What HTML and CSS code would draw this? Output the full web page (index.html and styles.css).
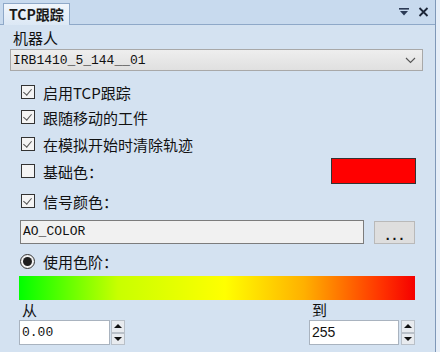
FILE: index.html
```html
<!DOCTYPE html>
<html lang="zh">
<head>
  <meta charset="UTF-8">
  <title>TCP跟踪</title>
  <link rel="stylesheet" href="styles.css">
</head>
<body>
  <div class="panel">
    <div class="tabstrip">
      <div class="tab">TCP跟踪</div>
      <div class="tab-tools">
        <svg width="12" height="10" viewBox="0 0 12 10"><rect x="1" y="1" width="10" height="1.6" fill="#2b3a55"/><path d="M2 4 L10 4 L6 8.5 Z" fill="#2b3a55"/></svg>
        <svg width="11" height="10" viewBox="0 0 11 10"><path d="M1.5 1 L9.5 9 M9.5 1 L1.5 9" stroke="#1c2638" stroke-width="1.8"/></svg>
      </div>
    </div>

    <div class="konten">
      <div class="label-robot">机器人</div>
      <div class="combo">
        <span class="mono">IRB1410_5_144__01</span>
        <svg width="11" height="7" viewBox="0 0 11 7"><path d="M1 1 L5.5 5.5 L10 1" stroke="#555" fill="none" stroke-width="1.1"/></svg>
      </div>

      <div class="checks">
        <div class="check-row">
          <span class="cb on"></span><span>启用TCP跟踪</span>
        </div>
        <div class="check-row gap-s">
          <span class="cb on"></span><span>跟随移动的工件</span>
        </div>
        <div class="check-row gap-m">
          <span class="cb on"></span><span>在模拟开始时清除轨迹</span>
        </div>
        <div class="check-row gap-m">
          <span class="cb"></span><span>基础色：</span>
          <span class="swatch"></span>
        </div>
        <div class="check-row gap-l">
          <span class="cb on"></span><span>信号颜色：</span>
        </div>
      </div>

      <div class="signal-row">
        <div class="textbox mono">AO_COLOR</div>
        <div class="btn-dots">...</div>
      </div>

      <div class="radio-row">
        <span class="radio"></span><span>使用色阶：</span>
      </div>

      <div class="gradient"></div>

      <div class="range-row">
        <div class="range">
          <div class="range-label">从</div>
          <div class="spin">
            <div class="spin-input mono">0.00</div>
            <div class="spin-btns">
              <span class="up"></span>
              <span class="down"></span>
            </div>
          </div>
        </div>
        <div class="range">
          <div class="range-label">到</div>
          <div class="spin">
            <div class="spin-input sans">255</div>
            <div class="spin-btns">
              <span class="up"></span>
              <span class="down"></span>
            </div>
          </div>
        </div>
      </div>
    </div>
  </div>
</body>
</html>
```

FILE: styles.css
```css
body {
  margin: 0;
  background: #e6eef8;
  font-family: "Noto Sans CJK SC", "Noto Sans", sans-serif;
  color: #111;
}

.panel {
  width: 435px;
  height: 352px;
  background: #d4e2f1;
  border-right: 1px solid #7f98b8;
  overflow: hidden;
}

.tabstrip {
  height: 25px;
  background: #c8daee;
  border-bottom: 1px solid #8ea8c8;
  box-sizing: border-box;
  display: flex;
  align-items: flex-end;
  justify-content: space-between;
}

.tab {
  margin-left: 3px;
  width: 67px;
  height: 22px;
  box-sizing: border-box;
  border: 1px solid #8ea8c8;
  border-bottom: none;
  background: linear-gradient(#f1f6fc, #dce8f5);
  font-size: 14px;
  font-weight: bold;
  line-height: 21px;
  padding-left: 5px;
  color: #1a1a1a;
  margin-bottom: -1px;
}

.tab-tools {
  display: flex;
  gap: 8px;
  align-items: center;
  height: 25px;
  padding-right: 6px;
}

.konten {
  padding: 3px 0 0 10px;
}

.mono {
  font-family: "Liberation Mono", "Noto Sans CJK SC", monospace;
}

.sans {
  font-family: "Liberation Sans", sans-serif;
}

.label-robot {
  font-size: 15px;
  line-height: 20px;
  padding-left: 3px;
}

.combo {
  margin-top: 1px;
  width: 413px;
  height: 22px;
  box-sizing: border-box;
  border: 1px solid #a8a8a8;
  background: linear-gradient(#eeeeee, #e0e0e0);
  display: flex;
  align-items: center;
  justify-content: space-between;
  padding: 0 6px 0 2px;
  font-size: 13px;
}

.checks {
  margin-top: 8px;
  padding-left: 11px;
  display: flex;
  flex-direction: column;
}

.check-row {
  height: 26px;
  display: flex;
  align-items: center;
  font-size: 15px;
}

.check-row.gap-s {
  margin-top: -1px;
}

.check-row.gap-m {
  margin-top: 1px;
}

.check-row.gap-l {
  margin-top: 4px;
}

.cb {
  width: 14px;
  height: 14px;
  box-sizing: border-box;
  border: 1px solid #333;
  background: #f4f4f4;
  margin-right: 8px;
  position: relative;
}

.cb.on::after {
  content: "";
  position: absolute;
  left: 3px;
  top: 1px;
  width: 4px;
  height: 7px;
  border-right: 1.5px solid #555;
  border-bottom: 1.5px solid #555;
  transform: rotate(40deg);
}

.swatch {
  margin-left: auto;
  margin-right: 19px;
  width: 85px;
  height: 26px;
  box-sizing: border-box;
  background: #ff0000;
  border: 1px solid #333;
}

.signal-row {
  margin-top: 6px;
  padding-left: 10px;
  display: flex;
  align-items: center;
  gap: 10px;
}

.textbox {
  width: 344px;
  height: 24px;
  box-sizing: border-box;
  border: 1px solid #7c7c7c;
  background: #f1f1f1;
  font-size: 13px;
  line-height: 22px;
  padding-left: 2px;
}

.btn-dots {
  width: 41px;
  height: 23px;
  box-sizing: border-box;
  border: 1px solid #b9b9b9;
  background: #dedede;
  text-align: center;
  font-size: 14px;
  font-weight: bold;
  line-height: 26px;
  letter-spacing: 3px;
  padding-left: 3px;
  font-family: "Liberation Sans", sans-serif;
}

.radio-row {
  margin-top: 8px;
  padding-left: 10px;
  height: 18px;
  display: flex;
  align-items: center;
  font-size: 15px;
}

.radio {
  width: 15px;
  height: 15px;
  box-sizing: border-box;
  border-radius: 50%;
  border: 1px solid #333;
  background: #f2f2f2;
  margin-right: 8px;
  display: flex;
  align-items: center;
  justify-content: center;
}

.radio::after {
  content: "";
  width: 9px;
  height: 9px;
  border-radius: 50%;
  background: #1e1e1e;
}

.gradient {
  margin-top: 6px;
  margin-left: 9px;
  width: 396px;
  height: 24px;
  background: linear-gradient(to right, #00ff00 0%, #c8ff00 25%, #ffff00 52%, #ffb000 72%, #ff3000 92%, #f50000 100%);
}

.range-row {
  display: flex;
  justify-content: space-between;
  padding-left: 9px;
  width: 396px;
}

.range-label {
  font-size: 15px;
  line-height: 20px;
  padding-left: 3px;
}

.spin {
  display: flex;
  gap: 1px;
}

.spin-input {
  width: 91px;
  height: 25px;
  box-sizing: border-box;
  border: 1px solid #a9b3bf;
  background: #fff;
  font-size: 13px;
  line-height: 23px;
  padding-left: 2px;
}

.range:last-child .spin-input {
  width: 90px;
  font-size: 14px;
}

.range:last-child .spin {
  gap: 2px;
}

.spin-btns {
  display: flex;
  flex-direction: column;
  width: 14px;
  height: 25px;
}

.spin-btns span {
  flex: 1;
  box-sizing: border-box;
  border: 1px solid #b9c0c8;
  background: #e8ebef;
  display: flex;
  align-items: center;
  justify-content: center;
}

.spin-btns .up::after {
  content: "";
  border-left: 4px solid transparent;
  border-right: 4px solid transparent;
  border-bottom: 4px solid #111;
}

.spin-btns .down::after {
  content: "";
  border-left: 4px solid transparent;
  border-right: 4px solid transparent;
  border-top: 4px solid #111;
}
```
